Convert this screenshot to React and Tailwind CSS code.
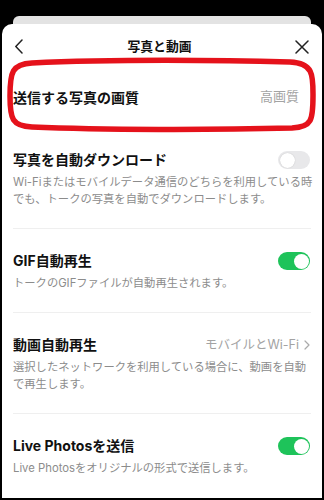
import React from "react";

function Toggle({ on }) {
  return on ? (
    <div className="w-[32px] h-[18px] rounded-full bg-[#1ec35a] flex items-center justify-end px-[1.5px]">
      <div className="w-[15px] h-[15px] rounded-full bg-white" />
    </div>
  ) : (
    <div className="w-[32px] h-[18px] rounded-full bg-[#e8e8ea] flex items-center justify-start px-[1.5px]">
      <div className="w-[15px] h-[15px] rounded-full bg-white shadow-[0_0_1px_rgba(0,0,0,0.25)]" />
    </div>
  );
}

function Row({ title, right, desc, last }) {
  return (
    <div className={"pt-[22px] pb-[20px] " + (last ? "" : "border-b border-[#efefef]")}>
      <div className="flex items-center justify-between h-[20px]">
        <div className="text-[14px] font-bold text-[#111] leading-[20px]">{title}</div>
        <div className="mr-[1px]">{right}</div>
      </div>
      <div className="mt-[4px] text-[11.3px] leading-[17px] text-[#8c8c8c] whitespace-nowrap">
        {desc}
      </div>
    </div>
  );
}

export default function App() {
  return (
    <div className="w-[324px] h-[500px] bg-black flex flex-col px-[2px] pb-[2px] font-['Inter','Noto_Sans_CJK_JP',sans-serif] overflow-hidden">
      <div className="mt-[16px] mx-[11px] h-[8px] rounded-t-[6px] bg-[#e3e3e3] shrink-0" />
      <div className="relative flex-1 bg-white rounded-t-[10px] px-[11px] flex flex-col">
        {/* header */}
        <div className="h-[44px] flex items-center justify-between pt-[1px]">
          <svg width="10" height="15" viewBox="0 0 10 15" className="ml-[1px]">
            <path d="M8 1 L1.8 7.5 L8 14" fill="none" stroke="#222" strokeWidth="1.5" strokeLinecap="round" strokeLinejoin="round" />
          </svg>
          <div className="text-[12.8px] font-bold text-[#111]">写真と動画</div>
          <svg width="14" height="14" viewBox="0 0 14 14" className="mr-[2px]">
            <path d="M1 1 L13 13 M13 1 L1 13" fill="none" stroke="#222" strokeWidth="1.5" strokeLinecap="round" />
          </svg>
        </div>
        {/* quality row */}
        <div className="h-[60px] flex items-center justify-between pb-[2px]">
          <div className="text-[14px] font-bold text-[#111]">送信する写真の画質</div>
          <div className="text-[13px] text-[#a3a3a3] mr-[12px]">高画質</div>
        </div>
        <Row
          title="写真を自動ダウンロード"
          right={<Toggle on={false} />}
          desc={
            <>
              Wi-Fiまたはモバイルデータ通信のどちらを利用している時
              <br />
              でも、トークの写真を自動でダウンロードします。
            </>
          }
        />
        <Row
          title="GIF自動再生"
          right={<Toggle on />}
          desc={<>トークのGIFファイルが自動再生されます。</>}
        />
        <Row
          title="動画自動再生"
          right={
            <div className="flex items-center gap-[5px] text-[12.5px] text-[#a3a3a3]">
              <span>モバイルとWi-Fi</span>
              <svg width="6" height="10" viewBox="0 0 6 10">
                <path d="M1 1 L5 5 L1 9" fill="none" stroke="#aaa" strokeWidth="1.2" strokeLinecap="round" strokeLinejoin="round" />
              </svg>
            </div>
          }
          desc={
            <>
              選択したネットワークを利用している場合に、動画を自動
              <br />
              で再生します。
            </>
          }
        />
        <Row
          title="Live Photosを送信"
          right={<Toggle on />}
          desc={<>Live Photosをオリジナルの形式で送信します。</>}
          last
        />
        {/* red annotation ellipse */}
        <svg className="absolute left-0 top-0 pointer-events-none" width="320" height="140" viewBox="0 0 320 140">
          <path
            d="M30 39 C 110 35, 220 36, 288 38 C 312 39, 311 52, 311 72 C 311 96, 310 103, 290 104 C 210 106, 100 106, 30 103 C 10 102, 8 95, 8 72 C 8 48, 10 40, 30 39 Z"
            fill="none"
            stroke="#e5121b"
            strokeWidth="5.5"
          />
        </svg>
      </div>
    </div>
  );
}
